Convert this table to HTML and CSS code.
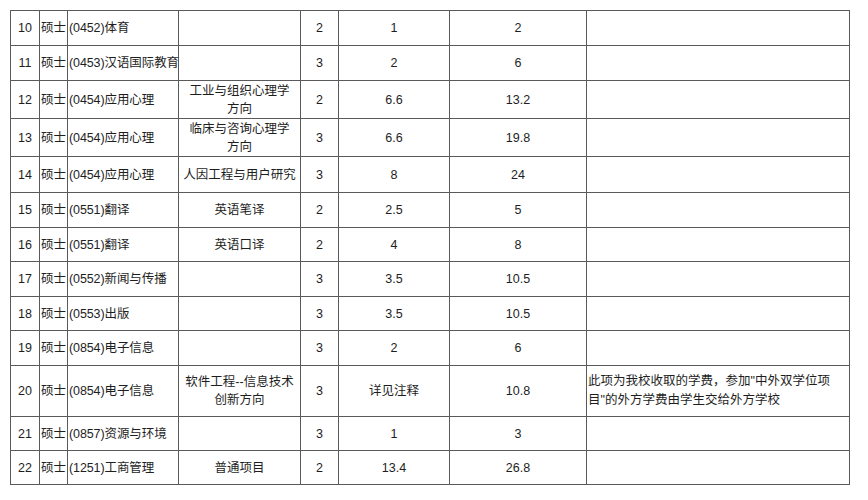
FILE: index.html
```html
<!DOCTYPE html>
<html lang="zh-CN">
<head>
<meta charset="utf-8">
<title>学费表</title>
<link rel="stylesheet" href="styles.css">
</head>
<body>
<div class="page">
<table class="fees">
  <colgroup>
    <col class="c-no"><col class="c-deg"><col class="c-major"><col class="c-dir">
    <col class="c-yrs"><col class="c-fee"><col class="c-total"><col class="c-note">
  </colgroup>
  <tbody>
    <tr class="h35"><td class="ctr">10</td><td class="ctr">硕士</td><td class="lft">(0452)体育</td><td class="ctr"></td><td class="ctr">2</td><td class="ctr">1</td><td class="ctr">2</td><td class="lft"></td></tr>
    <tr class="h35"><td class="ctr">11</td><td class="ctr">硕士</td><td class="lft">(0453)汉语国际教育</td><td class="ctr"></td><td class="ctr">3</td><td class="ctr">2</td><td class="ctr">6</td><td class="lft"></td></tr>
    <tr class="h38"><td class="ctr">12</td><td class="ctr">硕士</td><td class="lft">(0454)应用心理</td><td class="ctr">工业与组织心理学<span class="nw">方向</span></td><td class="ctr">2</td><td class="ctr">6.6</td><td class="ctr">13.2</td><td class="lft"></td></tr>
    <tr class="h38"><td class="ctr">13</td><td class="ctr">硕士</td><td class="lft">(0454)应用心理</td><td class="ctr">临床与咨询心理学<span class="nw">方向</span></td><td class="ctr">3</td><td class="ctr">6.6</td><td class="ctr">19.8</td><td class="lft"></td></tr>
    <tr class="h36"><td class="ctr">14</td><td class="ctr">硕士</td><td class="lft">(0454)应用心理</td><td class="ctr">人因工程与用户研究</td><td class="ctr">3</td><td class="ctr">8</td><td class="ctr">24</td><td class="lft"></td></tr>
    <tr class="h35"><td class="ctr">15</td><td class="ctr">硕士</td><td class="lft">(0551)翻译</td><td class="ctr">英语笔译</td><td class="ctr">2</td><td class="ctr">2.5</td><td class="ctr">5</td><td class="lft"></td></tr>
    <tr class="h34"><td class="ctr">16</td><td class="ctr">硕士</td><td class="lft">(0551)翻译</td><td class="ctr">英语口译</td><td class="ctr">2</td><td class="ctr">4</td><td class="ctr">8</td><td class="lft"></td></tr>
    <tr class="h35"><td class="ctr">17</td><td class="ctr">硕士</td><td class="lft">(0552)新闻与传播</td><td class="ctr"></td><td class="ctr">3</td><td class="ctr">3.5</td><td class="ctr">10.5</td><td class="lft"></td></tr>
    <tr class="h34"><td class="ctr">18</td><td class="ctr">硕士</td><td class="lft">(0553)出版</td><td class="ctr"></td><td class="ctr">3</td><td class="ctr">3.5</td><td class="ctr">10.5</td><td class="lft"></td></tr>
    <tr class="h35"><td class="ctr">19</td><td class="ctr">硕士</td><td class="lft">(0854)电子信息</td><td class="ctr"></td><td class="ctr">3</td><td class="ctr">2</td><td class="ctr">6</td><td class="lft"></td></tr>
    <tr class="h51"><td class="ctr">20</td><td class="ctr">硕士</td><td class="lft">(0854)电子信息</td><td class="ctr">软件工程--信息技术创新方向</td><td class="ctr">3</td><td class="ctr">详见注释</td><td class="ctr">10.8</td><td class="lft note">此项为我校收取的学费，参加"中外双学位项目"的外方学费由学生交给外方学校</td></tr>
    <tr class="h34"><td class="ctr">21</td><td class="ctr">硕士</td><td class="lft">(0857)资源与环境</td><td class="ctr"></td><td class="ctr">3</td><td class="ctr">1</td><td class="ctr">3</td><td class="lft"></td></tr>
    <tr class="h34"><td class="ctr">22</td><td class="ctr">硕士</td><td class="lft">(1251)工商管理</td><td class="ctr">普通项目</td><td class="ctr">2</td><td class="ctr">13.4</td><td class="ctr">26.8</td><td class="lft"></td></tr>
  </tbody>
</table>
</div>
</body>
</html>
```

FILE: styles.css
```css
html, body {
  margin: 0;
  padding: 0;
  background: #ffffff;
}

.page {
  padding: 10px 0 0 10px;
}

.fees {
  border-collapse: collapse;
  table-layout: fixed;
  width: 840px;
  font-family: "Liberation Sans", "Noto Sans CJK SC", sans-serif;
  font-size: 12.5px;
  color: #1e1e1e;
}

.fees td {
  border: 1px solid #5a5a5a;
  padding: 0 1px;
  line-height: 18px;
  vertical-align: middle;
  white-space: normal;
}

.c-no { width: 29px; }
.c-deg { width: 28px; }
.c-major { width: 111px; }
.c-dir { width: 122px; }
.c-yrs { width: 38px; }
.c-fee { width: 111px; }
.c-total { width: 137px; }
.c-note { width: 263px; }

.ctr { text-align: center; }
.lft { text-align: left; }

.fees td:nth-child(2),
.fees td:nth-child(3) {
  padding: 0;
  white-space: nowrap;
  overflow: visible;
}

.fees td:nth-child(3) {
  padding-left: 1px;
  letter-spacing: -0.1px;
}

.nw { white-space: nowrap; }

.fees td.note {
  line-height: 19px;
  padding: 0 10px 0 1px;
}

.h34 td { height: 33px; }
.h35 td { height: 34px; }
.h36 td { height: 35px; }
.h38 td { height: 37px; }
.h51 td { height: 50px; }
```
